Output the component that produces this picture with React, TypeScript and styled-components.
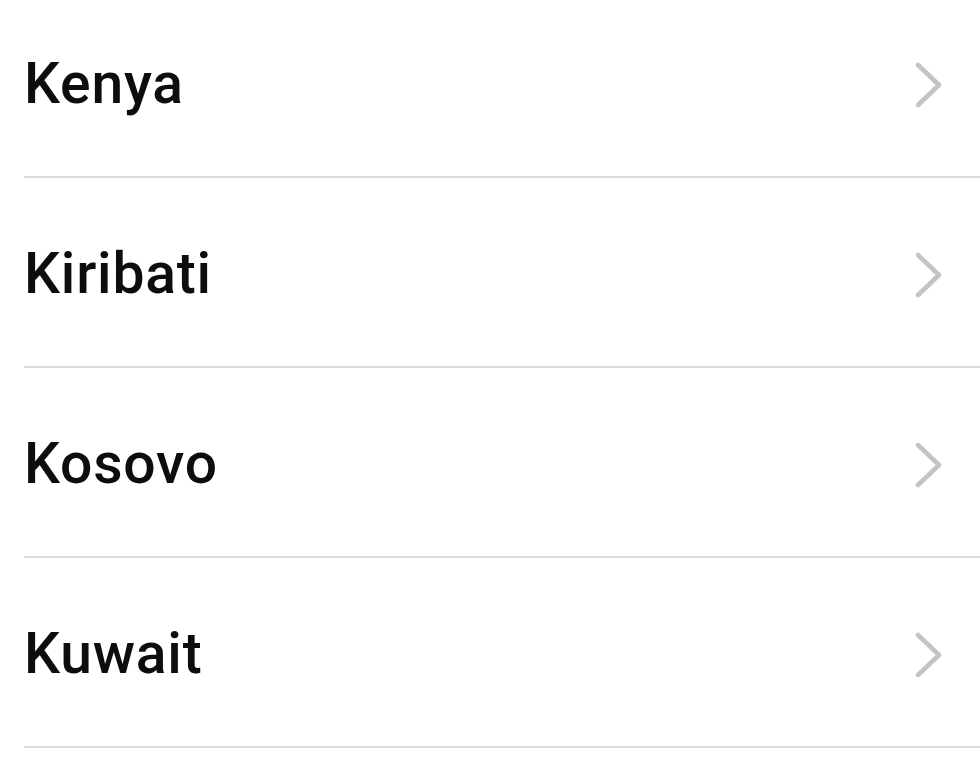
import styled, { createGlobalStyle } from "styled-components";

const countries = ["Kenya", "Kiribati", "Kosovo", "Kuwait"];

const GlobalStyle = createGlobalStyle`
  html, body {
    margin: 0;
    padding: 0;
    background: #ffffff;
    overflow: hidden;
  }
`;

const Screen = styled.div`
  width: 980px;
  height: 765px;
  overflow: hidden;
  background: #ffffff;
  font-family: Roboto, "Liberation Sans", Arial, sans-serif;
`;

// list is scrolled a little, so the first row is cut at the top
const List = styled.ul`
  list-style: none;
  margin: -12px 0 0 24px;
  padding: 0;
`;

const Row = styled.li`
  display: flex;
  align-items: center;
  justify-content: space-between;
  box-sizing: border-box;
  height: 190px;
  padding: 3px 36px 0 0;
  border-bottom: 2px solid #dadada;
`;

const Label = styled.span`
  font-size: 57px;
  font-weight: 500;
  line-height: 1;
  color: #0d0d0d;
  letter-spacing: 0.8px;
`;

const Chevron = styled.svg`
  width: 30px;
  height: 46px;
  margin-top: 2px;
  flex-shrink: 0;
`;

function ChevronIcon() {
  return (
    <Chevron viewBox="0 0 30 46">
      <polyline
        points="4,3 25,23 4,43"
        fill="none"
        stroke="#c4c4c8"
        strokeWidth="4.5"
        strokeLinecap="round"
        strokeLinejoin="round"
      />
    </Chevron>
  );
}

export default function App() {
  return (
    <Screen>
      <GlobalStyle />
      <List>
        {countries.map((name) => (
          <Row key={name}>
            <Label>{name}</Label>
            <ChevronIcon />
          </Row>
        ))}
      </List>
    </Screen>
  );
}
